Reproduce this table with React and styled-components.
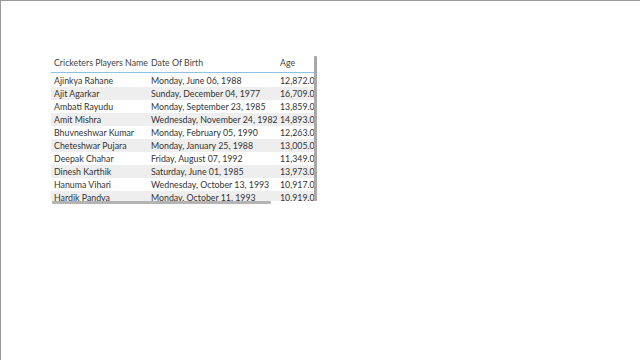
import React from "react";
import styled, { createGlobalStyle } from "styled-components";

const GlobalStyle = createGlobalStyle`
  html, body {
    margin: 0;
    padding: 0;
    background: #ffffff;
  }
  body {
    font-family: Lato, "Noto Sans", sans-serif;
  }
`;

const Page = styled.div`
  width: 640px;
  height: 360px;
  box-sizing: border-box;
  border-top: 1px solid #9a9a9a;
  border-left: 1px solid #9a9a9a;
  padding: 54px 0 0 50px;
`;

const Visual = styled.div`
  position: relative;
  width: 267px;
  height: 150px;
`;

const Viewport = styled.div`
  width: 263px;
  height: 146px;
  overflow: hidden;
`;

const Table = styled.div`
  width: 320px;
  color: #333333;
  font-size: 8.8px;
`;

const Row = styled.div`
  display: grid;
  grid-template-columns: 97px 129px 94px;
  height: 13px;
  line-height: 13px;
  background: ${(p) => (p.$striped ? "#eeeeee" : "#ffffff")};
`;

const HeaderRow = styled(Row)`
  height: 17px;
  line-height: 16px;
  margin-bottom: 1px;
  border-bottom: 1px solid #8fc1e3;
  color: #444;
`;

const Cell = styled.div`
  padding-left: 3px;
  white-space: nowrap;
  overflow: hidden;
`;

const VScroll = styled.div`
  position: absolute;
  left: 263px;
  top: 1px;
  width: 3px;
  height: 145px;
  background: #a8a8a8;
  border-radius: 1px;
`;

const HScroll = styled.div`
  position: absolute;
  left: 1px;
  top: 146px;
  width: 219px;
  height: 3px;
  background: #b4b4b4;
  border-radius: 1px;
`;

const players = [
  ["Ajinkya Rahane", "Monday, June 06, 1988", "12,872.00"],
  ["Ajit Agarkar", "Sunday, December 04, 1977", "16,709.00"],
  ["Ambati Rayudu", "Monday, September 23, 1985", "13,859.00"],
  ["Amit Mishra", "Wednesday, November 24, 1982", "14,893.00"],
  ["Bhuvneshwar Kumar", "Monday, February 05, 1990", "12,263.00"],
  ["Cheteshwar Pujara", "Monday, January 25, 1988", "13,005.00"],
  ["Deepak Chahar", "Friday, August 07, 1992", "11,349.00"],
  ["Dinesh Karthik", "Saturday, June 01, 1985", "13,973.00"],
  ["Hanuma Vihari", "Wednesday, October 13, 1993", "10,917.00"],
  ["Hardik Pandya", "Monday, October 11, 1993", "10,919.00"],
];

export default function App() {
  return (
    <>
      <GlobalStyle />
      <Page>
        <Visual>
          <Viewport>
            <Table>
              <HeaderRow>
                <Cell>Cricketers Players Name</Cell>
                <Cell>Date Of Birth</Cell>
                <Cell>Age</Cell>
              </HeaderRow>
              {players.map((p, i) => (
                <Row key={p[0]} $striped={i % 2 === 1}>
                  <Cell>{p[0]}</Cell>
                  <Cell>{p[1]}</Cell>
                  <Cell>{p[2]}</Cell>
                </Row>
              ))}
            </Table>
          </Viewport>
          <VScroll />
          <HScroll />
        </Visual>
      </Page>
    </>
  );
}
